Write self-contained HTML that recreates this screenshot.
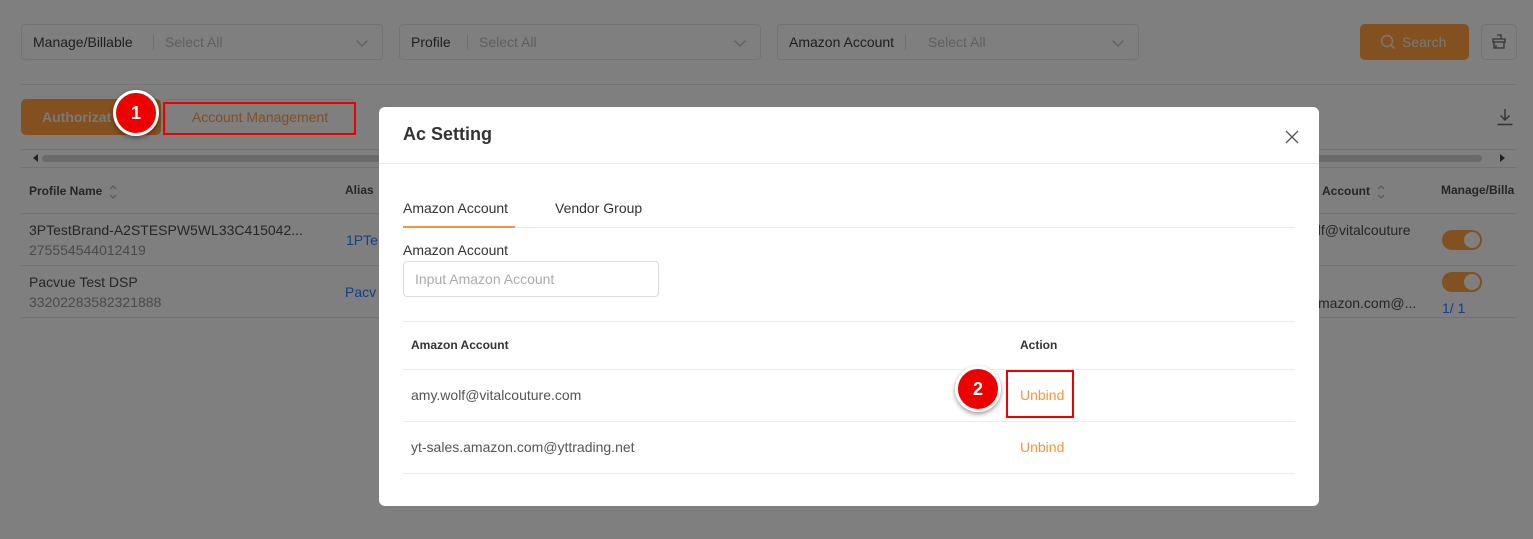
<!DOCTYPE html>
<html><head><meta charset="utf-8"><style>
*{box-sizing:border-box;margin:0;padding:0}
body{width:1533px;height:539px;overflow:hidden;background:#7f7f7f;font-family:"Liberation Sans",sans-serif;position:relative;color:#222}
.a{position:absolute}
.sel{position:absolute;top:24px;height:36px;border:1px solid #737373;border-radius:4px;font-size:14px;line-height:34px;color:#1e1e1e}
.sel .l{position:absolute;left:11px}
.sel .d{position:absolute;top:10px;height:15px;border-left:1px solid #6e6e6e}
.sel .p{position:absolute;color:#5f5f5f}
.chev{position:absolute;right:16px;top:12px;width:8px;height:8px;border-right:1.3px solid #555;border-bottom:1.3px solid #555;transform:rotate(45deg)}
.hl{position:absolute;height:1px;background:#737373}
.txt{position:absolute;font-size:14px;color:#262626;white-space:nowrap}
.m{position:absolute;left:379px;top:107px;width:940px;height:399px;background:#fff;border-radius:6px}
.red{position:absolute;border:2px solid #e00;}
.badge{position:absolute;width:46px;height:46px;border-radius:50%;background:#e00;border:3px solid #fff;color:#fff;font-weight:bold;font-size:18px;text-align:center;line-height:40px;box-shadow:0 2px 5px rgba(0,0,0,.4)}
.tog{position:absolute;width:40px;height:20px;border-radius:10px;background:#83501f}
.tog:after{content:"";position:absolute;right:2px;top:2px;width:16px;height:16px;border-radius:50%;background:#7f7f7f}
.sort{display:inline-block;vertical-align:middle;margin-left:6px}
</style></head><body>
<div class="sel" style="left:21px;width:362px"><span class="l">Manage/Billable</span><span class="d" style="left:131px"></span><span class="p" style="left:143px">Select All</span><span class="chev"></span></div>
<div class="sel" style="left:399px;width:362px"><span class="l">Profile</span><span class="d" style="left:67px"></span><span class="p" style="left:79px">Select All</span><span class="chev"></span></div>
<div class="sel" style="left:777px;width:362px"><span class="l">Amazon Account</span><span class="d" style="left:127px"></span><span class="p" style="left:150px">Select All</span><span class="chev"></span></div>
<div class="a" style="left:1360px;top:24px;width:109px;height:36px;background:#83501f;border-radius:5px;color:#7a7a7a;font-size:14px;line-height:36px;padding-left:42px">Search</div>
<svg class="a" style="left:1380px;top:34px" width="16" height="16" viewBox="0 0 16 16"><circle cx="7" cy="7" r="5.5" fill="none" stroke="#7a7a7a" stroke-width="1.4"/><path d="M11 11l3.5 3.5" stroke="#7a7a7a" stroke-width="1.4"/></svg>
<div class="a" style="left:1481px;top:24px;width:36px;height:36px;border:1px solid #737373;border-radius:5px"></div>
<svg class="a" style="left:1491px;top:34px" width="16" height="16" viewBox="0 0 16 16" fill="none" stroke="#333" stroke-width="1.3"><path d="M6 1h4v4M2 5h12v3H2zM3 8v6h10V8M5 11v3"/></svg>
<div class="hl" style="left:21px;top:84px;width:1496px"></div>
<div class="a" style="left:21px;top:99px;width:140px;height:36px;background:#83501f;border-radius:5px;color:#7a7a7a;font-size:14px;line-height:36px;padding-left:21px;font-weight:bold">Authorizat</div>
<div class="a" style="left:165px;top:99px;width:190px;height:36px;border:1px solid #737373;border-radius:5px;color:#83501f;font-size:14px;line-height:34px;text-align:center">Account Management</div>
<div class="red" style="left:163px;top:102px;width:193px;height:33px"></div>
<div class="badge" style="left:113px;top:90px">1</div>
<svg class="a" style="left:1496px;top:108px" width="18" height="18" viewBox="0 0 18 18" fill="none" stroke="#333" stroke-width="1.4"><path d="M9 1v11M4.5 7.5L9 12l4.5-4.5M1.5 16.5h15"/></svg>
<div class="hl" style="left:21px;top:149px;width:1496px"></div>
<div class="a" style="left:42px;top:155px;width:1440px;height:7px;background:#6a6a6a;border-radius:4px"></div>
<div class="a" style="left:33px;top:154px;border:4px solid transparent;border-right:5px solid #222;border-left:0"></div>
<div class="a" style="left:1500px;top:154px;border:4px solid transparent;border-left:5px solid #222;border-right:0"></div>
<div class="hl" style="left:21px;top:167px;width:1496px"></div>
<div class="txt" style="left:29px;top:183px;font-size:12px;font-weight:bold">Profile Name<svg class="sort" width="10" height="18" viewBox="0 0 10 18" fill="none" stroke="#555" stroke-width="1.1"><path d="M2 6l3-3 3 3M2 12l3 3 3-3"/></svg></div>
<div class="txt" style="left:345px;top:183px;font-size:12px;font-weight:bold">Alias</div>
<div class="txt" style="left:1322px;top:183px;font-size:12px;font-weight:bold">Account<svg class="sort" width="10" height="18" viewBox="0 0 10 18" fill="none" stroke="#555" stroke-width="1.1"><path d="M2 6l3-3 3 3M2 12l3 3 3-3"/></svg></div>
<div class="txt" style="left:1441px;top:183px;font-size:12px;font-weight:bold">Manage/Billa</div>
<div class="hl" style="left:21px;top:213px;width:1496px"></div>
<div class="txt" style="left:29px;top:222px">3PTestBrand-A2STESPW5WL33C415042...</div>
<div class="txt" style="left:29px;top:242px;color:#4a4a4a">275554544012419</div>
<div class="txt" style="left:346px;top:232px;color:#123e8a">1PTe</div>
<div class="txt" style="left:1310px;top:222px">olf@vitalcouture</div>
<div class="tog" style="left:1442px;top:230px"></div>
<div class="hl" style="left:21px;top:265px;width:1496px"></div>
<div class="txt" style="left:29px;top:274px">Pacvue Test DSP</div>
<div class="txt" style="left:29px;top:294px;color:#4a4a4a">33202283582321888</div>
<div class="txt" style="left:345px;top:284px;color:#123e8a">Pacv</div>
<div class="txt" style="left:1318px;top:295px">mazon.com@...</div>
<div class="tog" style="left:1442px;top:272px"></div>
<div class="txt" style="left:1442px;top:300px;color:#123e8a">1/ 1</div>
<div class="hl" style="left:21px;top:317px;width:1496px"></div>

<div class="m">
<div class="txt" style="left:24px;top:17px;font-size:18px;font-weight:bold;color:#333">Ac Setting</div>
<svg class="a" style="left:906px;top:23px" width="14" height="14" viewBox="0 0 14 14" stroke="#555" stroke-width="1.3"><path d="M1 1l12 12M13 1L1 13"/></svg>
<div class="hl" style="left:0;top:56px;width:940px;background:#e8e8e8"></div>
<div class="txt" style="left:24px;top:93px;color:#333">Amazon Account</div>
<div class="txt" style="left:176px;top:93px;color:#333">Vendor Group</div>
<div class="hl" style="left:24px;top:120px;width:892px;background:#e8e8e8"></div>
<div class="a" style="left:24px;top:119px;width:112px;height:2px;background:#f5953a"></div>
<div class="txt" style="left:24px;top:135px;color:#333">Amazon Account</div>
<div class="a" style="left:24px;top:154px;width:256px;height:36px;border:1px solid #ddd;border-radius:4px;font-size:14px;color:#aaa;line-height:34px;padding-left:11px">Input Amazon Account</div>
<div class="hl" style="left:24px;top:214px;width:892px;background:#ececec"></div>
<div class="txt" style="left:32px;top:231px;font-size:12px;font-weight:bold;color:#333">Amazon Account</div>
<div class="txt" style="left:641px;top:231px;font-size:12px;font-weight:bold;color:#333">Action</div>
<div class="hl" style="left:24px;top:262px;width:892px;background:#ececec"></div>
<div class="txt" style="left:32px;top:280px;color:#555">amy.wolf@vitalcouture.com</div>
<div class="txt" style="left:641px;top:280px;color:#f5953a">Unbind</div>
<div class="hl" style="left:24px;top:314px;width:892px;background:#ececec"></div>
<div class="txt" style="left:32px;top:332px;color:#555">yt-sales.amazon.com@yttrading.net</div>
<div class="txt" style="left:641px;top:332px;color:#f5953a">Unbind</div>
<div class="hl" style="left:24px;top:366px;width:892px;background:#ececec"></div>
<div class="red" style="left:627px;top:263px;width:68px;height:48px"></div>
<div class="badge" style="left:576px;top:259px">2</div>
</div>
</body></html>
